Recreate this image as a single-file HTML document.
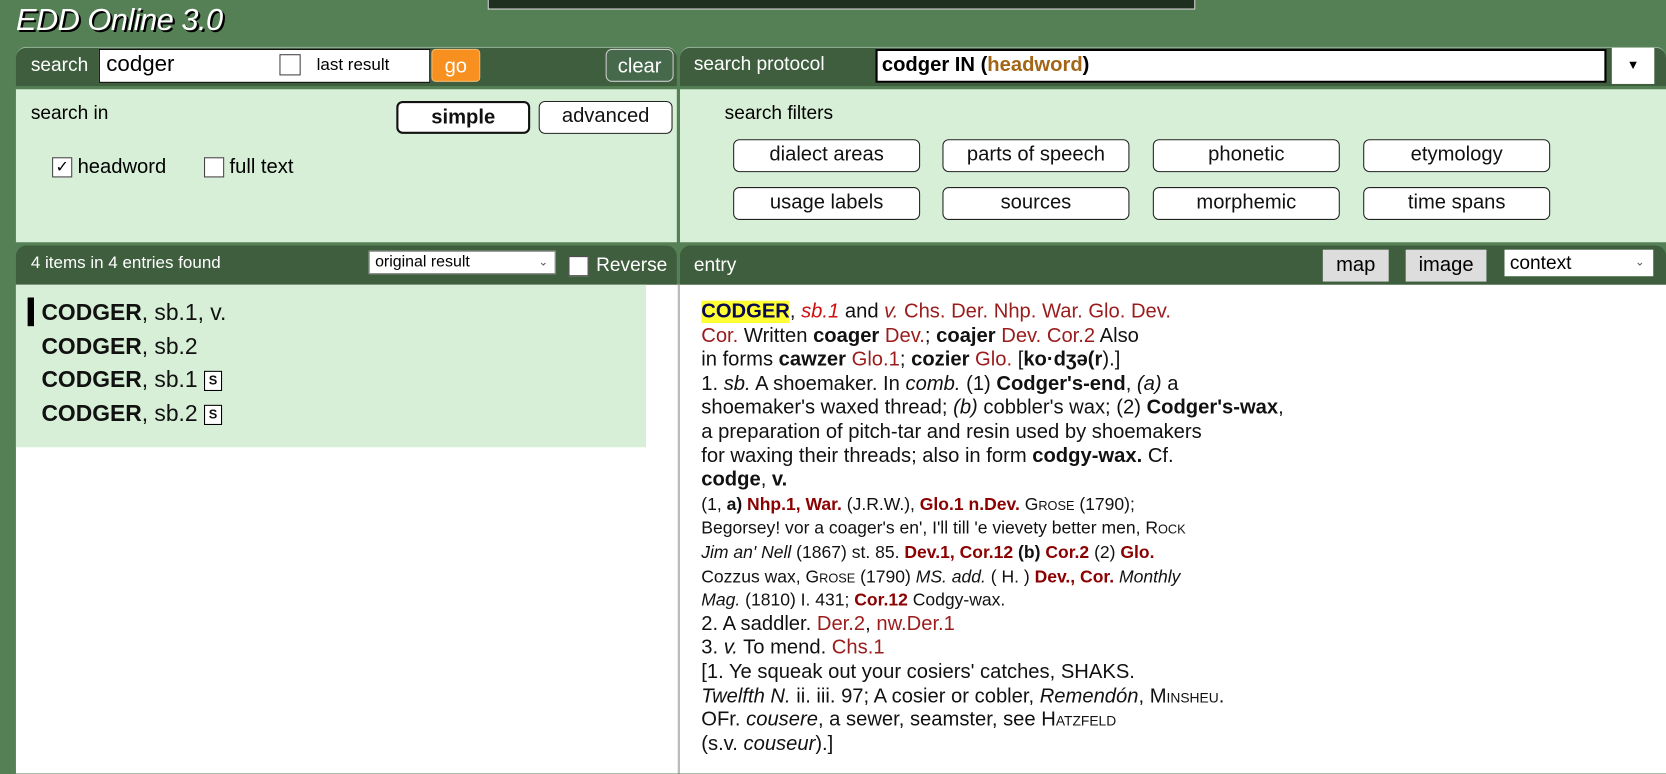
<!DOCTYPE html>
<html><head><meta charset="utf-8"><style>
*{margin:0;padding:0;box-sizing:border-box}
body{width:1666px;height:767px;overflow:hidden;background:#558055;font-family:"Liberation Sans",Arial,sans-serif;position:relative}
#wrap{position:absolute;left:0;top:0;width:1568px;height:722px;transform:scale(1.0625);transform-origin:0 0}
.a{position:absolute}
.bar{background:#3e5e3e;color:#fff;border-radius:10px 10px 0 0}
.light{background:#d6efd6}
.btn{position:absolute;background:#fff;border:1px solid #222;border-radius:6px;text-align:center;font-size:19px;line-height:28px;color:#111}
.red{color:#9b1c1c}
.dr{color:#8b0000;font-weight:bold}
.sc{font-variant:small-caps}
#entry{left:660px;top:283px;width:620px;font-size:19px;line-height:22.6px;color:#111}
#entry .s{font-size:16.5px}
</style></head><body><div id="wrap">
<div class="a" style="left:459px;top:-2px;width:666px;height:11px;background:#1f2f1f;border:1px solid #ddd"></div>
<div class="a" style="left:15px;top:0;font-size:29px;font-style:italic;color:#fff;text-shadow:2px 2px 0 #000;line-height:38px;letter-spacing:-0.5px">EDD Online 3.0</div>

<div class="a bar" style="left:15px;top:44px;width:622px;height:37px;border-top:1px solid #9ab59a"></div>
<div class="a" style="left:29px;top:50px;color:#fff;font-size:18px;line-height:22px">search</div>
<div class="a" style="left:93px;top:46px;width:312px;height:32px;background:#fff;border:1px solid #000"></div>
<div class="a" style="left:100px;top:48px;font-size:21px;line-height:26px">codger</div>
<div class="a" style="left:263px;top:51px;width:20px;height:20px;border:1px solid #444;background:#fff"></div>
<div class="a" style="left:298px;top:52px;font-size:16px;line-height:20px">last result</div>
<div class="a" style="left:406px;top:46px;width:46px;height:31px;background:#f7901e;border:1px solid #f2b870;border-radius:4px;color:#fff;font-size:19px;text-align:center;line-height:32px">go</div>
<div class="a" style="left:570px;top:46px;width:64px;height:31px;border:1px solid #ccc;border-radius:6px;color:#fff;font-size:19px;text-align:center;line-height:32px;background:#45694a">clear</div>

<div class="a light" style="left:15px;top:84px;width:622px;height:144px"></div>
<div class="a" style="left:29px;top:96px;font-size:18px">search in</div>
<div class="btn" style="left:373px;top:95px;width:126px;height:31px;border:2.5px solid #111;font-weight:bold">simple</div>
<div class="btn" style="left:507px;top:95px;width:126px;height:31px">advanced</div>
<div class="a" style="left:49px;top:148px;width:19px;height:19px;border:1px solid #444;background:#fff;font-size:15px;line-height:17px;text-align:center">✓</div>
<div class="a" style="left:73px;top:147px;font-size:19px">headword</div>
<div class="a" style="left:192px;top:148px;width:19px;height:19px;border:1px solid #444;background:#fff"></div>
<div class="a" style="left:216px;top:147px;font-size:19px">full text</div>

<div class="a bar" style="left:15px;top:231px;width:622px;height:37px"></div>
<div class="a" style="left:29px;top:239px;color:#fff;font-size:16px">4 items in 4 entries found</div>
<div class="a" style="left:347px;top:236px;width:176px;height:22px;background:#fff;border:1px solid #888;font-size:15px;line-height:20px;padding-left:5px">original result<span style="position:absolute;right:6px;font-size:11px;color:#555">&#8964;</span></div>
<div class="a" style="left:535px;top:241px;width:19px;height:19px;background:#fff;border:1px solid #444"></div>
<div class="a" style="left:561px;top:239px;color:#fff;font-size:18px">Reverse</div>

<div class="a" style="left:15px;top:268px;width:623px;height:460px;background:#fff"></div>
<div class="a light" style="left:15px;top:268px;width:593px;height:153px"></div>
<div class="a" style="left:26px;top:280px;width:6px;height:27px;background:#000"></div>
<div class="a" style="left:39px;top:279px;font-size:21.5px;line-height:31.7px;color:#111">
<div><b>CODGER</b>, sb.1, v.</div>
<div><b>CODGER</b>, sb.2</div>
<div><b>CODGER</b>, sb.1 <span style="display:inline-block;width:17px;height:19px;border:1px solid #000;background:#fff;font-size:12px;font-weight:bold;line-height:17px;text-align:center;vertical-align:2px">S</span></div>
<div><b>CODGER</b>, sb.2 <span style="display:inline-block;width:17px;height:19px;border:1px solid #000;background:#fff;font-size:12px;font-weight:bold;line-height:17px;text-align:center;vertical-align:2px">S</span></div>
</div>

<div class="a bar" style="left:640px;top:44px;width:928px;height:37px;border-top:1px solid #9ab59a"></div>
<div class="a" style="left:653px;top:50px;color:#fff;font-size:18px">search protocol</div>
<div class="a" style="left:824px;top:46px;width:688px;height:32px;background:#fff;border:2px solid #000;font-size:19px;font-weight:bold;line-height:28px;padding-left:4px">codger IN (<span style="color:#a36516">headword</span>)</div>
<div class="a" style="left:1517px;top:45px;width:40px;height:34px;background:#fff;font-size:12px;text-align:center;line-height:32px">▼</div>
<div class="a light" style="left:640px;top:84px;width:928px;height:144px"></div>
<div class="a" style="left:682px;top:96px;font-size:18px">search filters</div>
<div class="btn" style="left:690px;top:131px;width:176px;height:31px">dialect areas</div>
<div class="btn" style="left:887px;top:131px;width:176px;height:31px">parts of speech</div>
<div class="btn" style="left:1085px;top:131px;width:176px;height:31px">phonetic</div>
<div class="btn" style="left:1283px;top:131px;width:176px;height:31px">etymology</div>
<div class="btn" style="left:690px;top:176px;width:176px;height:31px">usage labels</div>
<div class="btn" style="left:887px;top:176px;width:176px;height:31px">sources</div>
<div class="btn" style="left:1085px;top:176px;width:176px;height:31px">morphemic</div>
<div class="btn" style="left:1283px;top:176px;width:176px;height:31px">time spans</div>

<div class="a bar" style="left:640px;top:231px;width:928px;height:37px"></div>
<div class="a" style="left:653px;top:239px;color:#fff;font-size:18px">entry</div>
<div class="a" style="left:1245px;top:235px;width:62px;height:30px;background:#ddd;text-align:center;font-size:19px;line-height:30px">map</div>
<div class="a" style="left:1323px;top:235px;width:76px;height:30px;background:#ddd;text-align:center;font-size:19px;line-height:30px">image</div>
<div class="a" style="left:1416px;top:235px;width:140px;height:25px;background:#fff;font-size:18px;line-height:24px;padding-left:5px">context<span style="position:absolute;right:8px;font-size:11px;color:#555">&#8964;</span></div>
<div class="a" style="left:638px;top:268px;width:930px;height:460px;background:#fff;border-left:2px solid #bbb"></div>

<div class="a" id="entry">
<div><b style="background:#ffff33;color:#0a0a50">CODGER</b>, <i style="color:#d01010">sb.1</i> and <i class="red">v.</i> <span class="red">Chs. Der. Nhp. War. Glo. Dev.</span></div>
<div><span class="red">Cor.</span> Written <b>coager</b> <span class="red">Dev.</span>; <b>coajer</b> <span class="red">Dev. Cor.2</span> Also</div>
<div>in forms <b>cawzer</b> <span class="red">Glo.1</span>; <b>cozier</b> <span class="red">Glo.</span> [<b>ko·dʒə(r</b>).]</div>
<div>1. <i>sb.</i> A shoemaker. In <i>comb.</i> (1) <b>Codger's-end</b>, <i>(a)</i> a</div>
<div>shoemaker's waxed thread; <i>(b)</i> cobbler's wax; (2) <b>Codger's-wax</b>,</div>
<div>a preparation of pitch-tar and resin used by shoemakers</div>
<div>for waxing their threads; also in form <b>codgy-wax.</b> Cf.</div>
<div><b>codge</b>, <b>v.</b></div>
<div class="s">(1, <b>a)</b> <span class="dr">Nhp.1, War.</span> (J.R.W.), <span class="dr">Glo.1 n.Dev.</span> <span class="sc">Grose</span> (1790);</div>
<div class="s">Begorsey! vor a coager's en', I'll till 'e vievety better men, <span class="sc">Rock</span></div>
<div class="s"><i>Jim an' Nell</i> (1867) st. 85. <span class="dr">Dev.1, Cor.12</span> <b>(b)</b> <span class="dr">Cor.2</span> (2) <span class="dr">Glo.</span></div>
<div class="s">Cozzus wax, <span class="sc">Grose</span> (1790) <i>MS. add.</i> ( H. ) <span class="dr">Dev., Cor.</span> <i>Monthly</i></div>
<div class="s"><i>Mag.</i> (1810) I. 431; <span class="dr">Cor.12</span> Codgy-wax.</div>
<div>2. A saddler. <span class="red">Der.2</span>, <span class="red">nw.Der.1</span></div>
<div>3. <i>v.</i> To mend. <span class="red">Chs.1</span></div>
<div>[1. Ye squeak out your cosiers' catches, SHAKS.</div>
<div><i>Twelfth N.</i> ii. iii. 97; A cosier or cobler, <i>Remendón</i>, <span class="sc">Minsheu</span>.</div>
<div>OFr. <i>cousere</i>, a sewer, seamster, see <span class="sc">Hatzfeld</span></div>
<div>(s.v. <i>couseur</i>).]</div>
</div>
</div></body></html>
